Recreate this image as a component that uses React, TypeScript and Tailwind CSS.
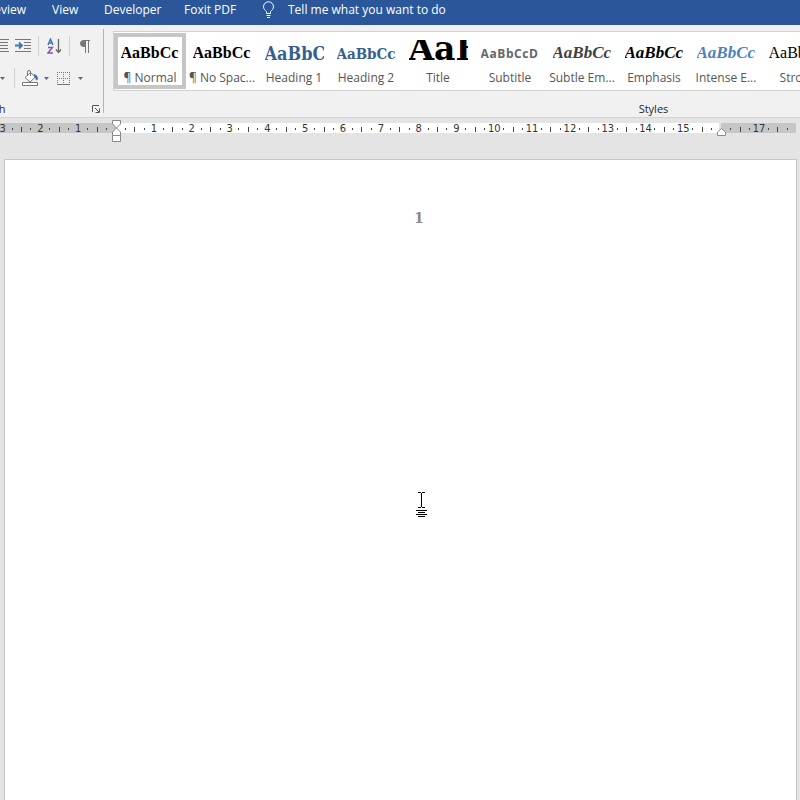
import React from "react";

type StyleTile = { name: string; sample: string; look: string };

const styleTiles: StyleTile[] = [
  { name: "¶ Normal", sample: "AaBbCc", look: "font-['Liberation_Serif',serif] text-[16px] leading-[22px] font-bold text-black" },
  { name: "¶ No Spac...", sample: "AaBbCc", look: "font-['Liberation_Serif',serif] text-[16px] leading-[22px] font-bold text-black" },
  { name: "Heading 1", sample: "AaBbC", look: "font-['DejaVu_Serif_Condensed','DejaVu_Serif',serif] text-[18px] leading-5 font-bold text-[#365f91]" },
  { name: "Heading 2", sample: "AaBbCc", look: "font-['DejaVu_Serif_Condensed','DejaVu_Serif',serif] text-[15px] leading-5 font-bold text-[#365f91]" },
  { name: "Title", sample: "AaB", look: "font-['DejaVu_Serif',serif] text-[33px] leading-[30px] font-bold text-black" },
  { name: "Subtitle", sample: "AaBbCcD", look: "font-['Open_Sans',sans-serif] text-[12px] leading-5 font-bold tracking-wider text-[#666]" },
  { name: "Subtle Em...", sample: "AaBbCc", look: "font-['Liberation_Serif',serif] text-[17px] leading-[22px] font-bold italic text-[#404040]" },
  { name: "Emphasis", sample: "AaBbCc", look: "font-['Liberation_Serif',serif] text-[17px] leading-[22px] font-bold italic text-black" },
  { name: "Intense E...", sample: "AaBbCc", look: "font-['Liberation_Serif',serif] text-[17px] leading-[22px] font-bold italic text-[#4f81bd]" },
  { name: "Strong", sample: "AaBbCc", look: "font-['Liberation_Serif',serif] text-[16px] leading-[22px] text-black" },
];

const marks = Array.from({ length: 22 }, (_, i) => i - 3);

function Caret() {
  return (
    <svg width="5" height="3" viewBox="0 0 5 3" fill="#666" aria-hidden="true">
      <path d="M0 0h5L2.500 3z" />
    </svg>
  );
}

function Divider() {
  return <span className="h-5 w-px bg-[#d0d0d0]" />;
}

function TabBar() {
  return (
    <nav className="flex h-[25px] shrink-0 items-start overflow-hidden bg-[#2b579a] text-[12px] leading-5 whitespace-nowrap text-white">
      <button className="-ml-[15px] w-[41px] text-right">Review</button>
      <button className="ml-[26px] w-[25px]">View</button>
      <button className="ml-[27px] w-[54px]">Developer</button>
      <button className="ml-[26px] w-[50px]">Foxit PDF</button>
      <button className="ml-7 flex items-start gap-[13px]">
        <svg width="13" height="18" viewBox="0 0 13 18" fill="none" stroke="#fff" className="mt-px" aria-hidden="true">
          <path d="M4.500 12.500V10.500C3 9 1.500 8 1.500 5.800a5 5 0 0 1 10 0C11.500 8 10 9 8.500 10.500v2zM4.500 14.500h4M5 16.500h3" />
        </svg>
        Tell me what you want to do
      </button>
    </nav>
  );
}

function ParagraphGroup() {
  return (
    <section aria-label="Paragraph" className="flex h-[84px] w-[104px] shrink-0 flex-col border-r border-[#b5b5b5] pt-[7px]">
      <div className="flex h-5 shrink-0 items-center">
        <button aria-label="Decrease indent" className="w-[9px] overflow-hidden">
          <svg width="9" height="14" viewBox="0 0 9 14" stroke="#777" fill="none">
            <path d="M0 .5h9M0 3.500h8M0 6.500h8M0 9.500h8M0 12.500h9" />
          </svg>
        </button>
        <button aria-label="Increase indent" className="ml-[6px]">
          <svg width="16" height="14" viewBox="0 0 16 14" fill="none" stroke="#777">
            <path d="M0 .5h16M9 3.500h7M9 6.500h7M9 9.500h7M0 12.500h16" />
            <path d="M0 6.500h6M4 3.500l3 3l-3 3" stroke="#3e76b5" strokeWidth="1.800" />
          </svg>
        </button>
        <span className="ml-[7px] flex"><Divider /></span>
        <button aria-label="Sort" className="ml-2">
          <svg width="15" height="16" viewBox="0 0 15 16" fill="none">
            <path d="M1 7L3.500 1L6 7M2 5h3" stroke="#3e76b5" strokeWidth="1.400" />
            <path d="M1 9.500h4.500L1 15h5" stroke="#8a55a8" strokeWidth="1.400" />
            <path d="M11.500 1v13M9 11.500l2.500 3l2.500-3" stroke="#666" strokeWidth="1.300" />
          </svg>
        </button>
        <span className="ml-[7px] flex"><Divider /></span>
        <button aria-label="Show paragraph marks" className="ml-[10px]">
          <svg width="10" height="13" viewBox="0 0 10 13" fill="#777">
            <path d="M4 0h6v1H9v12H8V1H6v12H5V7H4C1.500 7 0 5.500 0 3.500S1.500 0 4 0z" />
          </svg>
        </button>
      </div>
      <div className="mt-3 flex h-5 shrink-0 items-center">
        <button aria-label="Line spacing"><Caret /></button>
        <span className="ml-[9px] flex"><Divider /></span>
        <button aria-label="Shading" className="ml-[7px] flex items-center gap-[5px]">
          <svg width="17" height="16" viewBox="0 0 17 16" fill="none" stroke="#777">
            <path d="M3 7.500L8.500 2.500l5 4.500l-5.500 5zM5.500 6V2q0-1.500 1.500-1.500T8.500 2v4" fill="#fff" />
            <path d="M12 4q4 1 4 5q-1 2-2 1q0-2-2-3z" fill="#3e76b5" stroke="none" />
            <path d="M.5 12.500h15v3H.5z" fill="#fff" />
          </svg>
          <Caret />
        </button>
        <button aria-label="Borders" className="ml-2 flex items-center gap-2">
          <svg width="13" height="13" viewBox="0 0 13 13" fill="none" stroke="#777" strokeDasharray="1 1">
            <path d="M.5 0v13M6.500 0v13M12.500 0v13M0 .5h13M0 6.500h13" />
            <path d="M0 12.500h13" strokeDasharray="none" />
          </svg>
          <Caret />
        </button>
      </div>
      <div className="mt-[13px] flex h-4 shrink-0 items-center justify-between pr-[3px]">
        <span className="-ml-12 text-[11px] leading-4 text-[#262626]">Paragraph</span>
        <button aria-label="Paragraph settings">
          <svg width="8" height="8" viewBox="0 0 8 8" fill="none" stroke="#555">
            <path d="M.5 7V.5H7M3 3l4 4M7.500 3.500v4h-4" />
          </svg>
        </button>
      </div>
    </section>
  );
}

function StylesGroup() {
  return (
    <section aria-label="Styles" className="ml-[9px] flex min-w-0 flex-1 flex-col pt-[2px]">
      <div className="flex h-[60px] shrink-0 overflow-hidden border border-r-0 border-[#d2d2d2] bg-white pt-px">
        {styleTiles.map((t, i) => (
          <button
            key={t.name}
            className={`flex h-14 w-[72px] shrink-0 flex-col items-center border-4 ${i === 0 ? "border-[#c6c6c6]" : "border-transparent"}`}
          >
            <span className={`mt-[3px] flex h-6 w-[59px] shrink-0 items-end overflow-hidden whitespace-nowrap ${t.look}`}>
              <span>{t.sample}</span>
            </span>
            <span className="mt-[7px] text-[12px] leading-[14px] whitespace-nowrap text-[#555]">{t.name}</span>
          </button>
        ))}
      </div>
      <h2 className="mt-[10px] pl-[394px] text-center text-[11px] leading-4 text-[#262626]">Styles</h2>
    </section>
  );
}

function Ruler() {
  return (
    <div className="relative h-[41px] shrink-0 overflow-hidden pt-[5px]" aria-label="Ruler">
      <div className="flex h-[10px] gap-[2px] pr-1">
        <div className="flex w-[719px]">
          <span className="w-[116px] bg-[#c6c6c6]" />
          <span className="flex-1 bg-white" />
        </div>
        <span className="flex-1 bg-[#c6c6c6]" />
      </div>
      <div className="absolute top-[6px] -left-[21px] grid h-[10px] w-[832px] grid-cols-[repeat(22,1fr)] font-['DejaVu_Sans_Condensed','DejaVu_Sans',sans-serif] text-[11px] leading-[10px] text-[#333]">
        {marks.map((n) => (
          <div key={n} className="grid grid-cols-4 items-center justify-items-center">
            <span className="h-[5px] w-px bg-[#444]" />
            <span className="h-[2px] w-px bg-[#444]" />
            <span className="flex w-0 justify-center">{n === 0 || n === 16 || n > 17 ? "" : Math.abs(n)}</span>
            <span className="h-[2px] w-px bg-[#444]" />
          </div>
        ))}
      </div>
      <svg className="absolute top-[2px] left-28" width="9" height="22" viewBox="0 0 9 22" fill="#fff" stroke="#888">
        <path d="M.5.5h8v3.500L4.500 8L.5 4zM.5 15.500V12L4.500 8l4 4v3.500zM.5 15.500h8v6h-8z" />
      </svg>
      <svg className="absolute top-[10px] left-[717px]" width="9" height="8" viewBox="0 0 9 8" fill="#fff" stroke="#888">
        <path d="M.5 7.500V4L4.500.5l4 3.500v3.500z" />
      </svg>
    </div>
  );
}

export default function App() {
  return (
    <div className="flex h-screen flex-col overflow-hidden bg-[#e4e4e4] font-['Open_Sans',sans-serif]">
      <TabBar />
      <div className="flex h-[93px] shrink-0 border-b border-[#d2d2d2] bg-[#f1f1f1] pt-1">
        <ParagraphGroup />
        <StylesGroup />
      </div>
      <Ruler />
      <main className="relative mr-[3px] ml-1 flex-1 border border-b-0 border-[#c6c6c6] bg-white pt-12">
        <p className="pl-[37px] text-center font-['DejaVu_Serif_Condensed','DejaVu_Serif',serif] text-[15px] leading-5 font-bold text-[#888]">1</p>
        <svg className="absolute top-[332px] left-[411px]" width="12" height="26" viewBox="0 0 12 26" fill="none" stroke="#000">
          <path d="M2 .5h3M6 .5h3M5.500 1v14M2 15.500h3M6 15.500h3M0 18.500h11M2 20.500h7M0 22.500h11M2 24.500h7" />
        </svg>
      </main>
    </div>
  );
}
